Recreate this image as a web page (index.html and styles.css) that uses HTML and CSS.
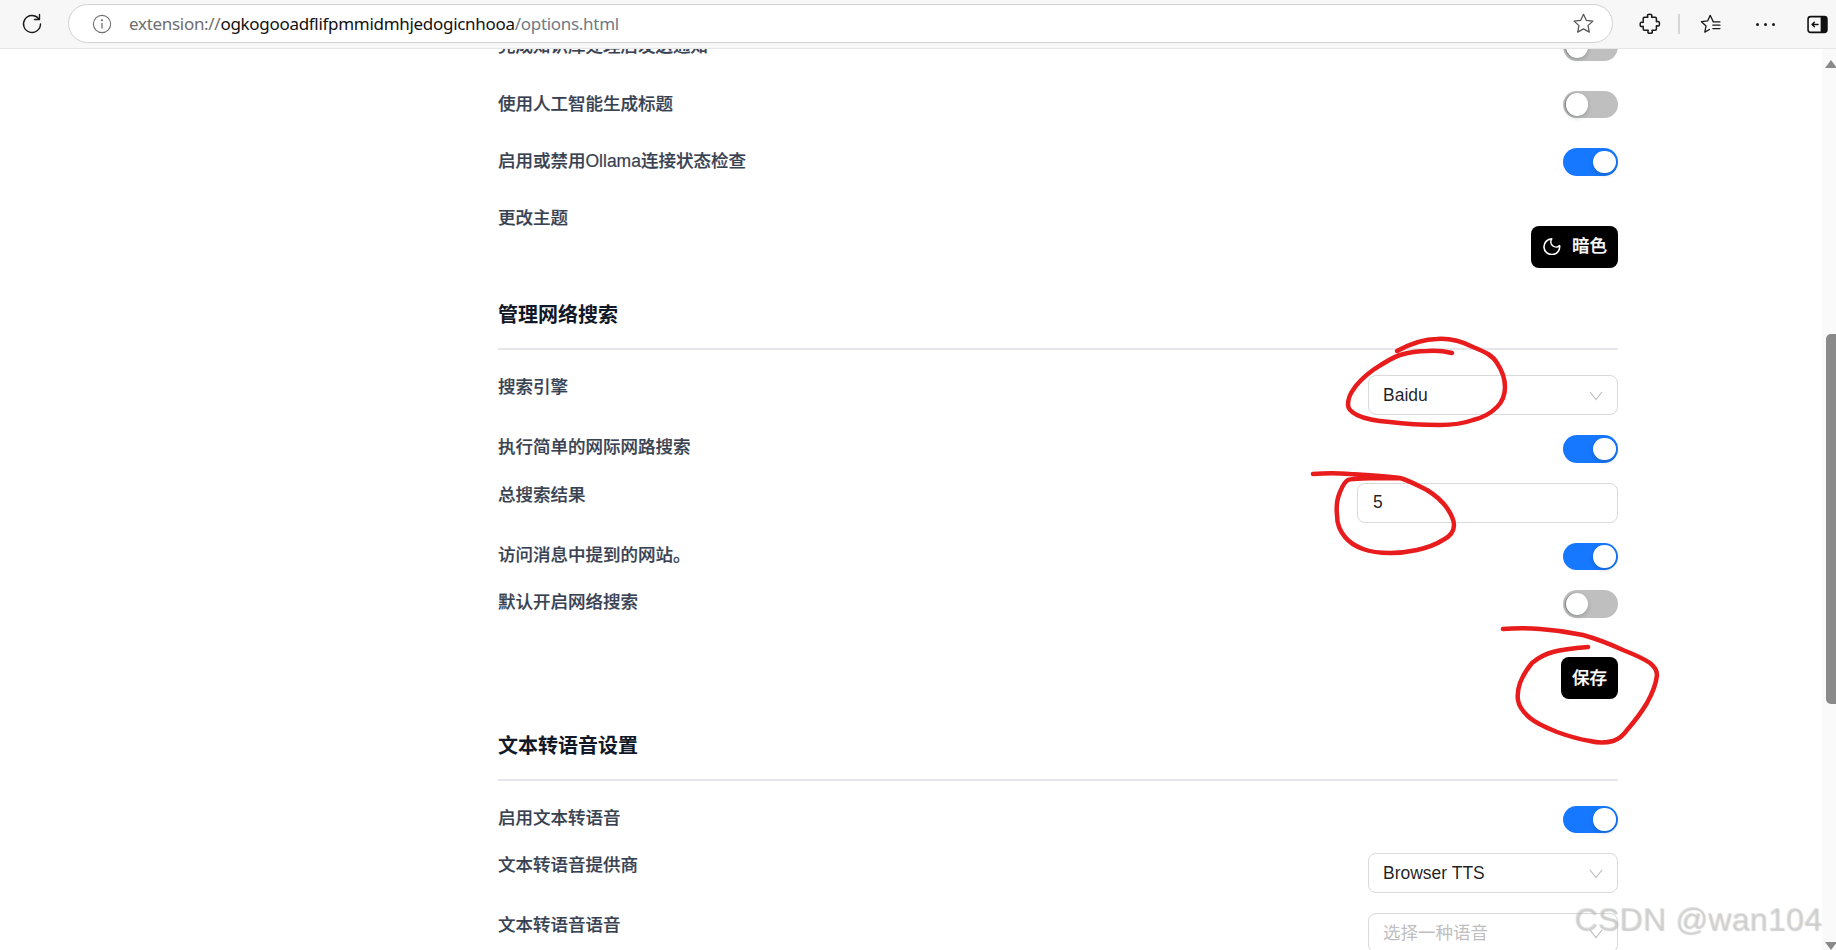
FILE: index.html
```html
<!DOCTYPE html>
<html lang="zh-CN">
<head>
<meta charset="utf-8">
<title>Options</title>
<link rel="stylesheet" href="styles.css">
</head>
<body>
<header class="toolbar">
  <button class="tool tool-reload" aria-label="Reload">
    <svg class="icon-24" viewBox="0 0 24 24" fill="none" stroke="#1a1a1a" stroke-width="1.4" stroke-linecap="round" stroke-linejoin="round"><path d="M18.5 6.500A8.500 8.500 0 1 0 20.500 12"/><path d="M19.500 2.500v5h-5"/></svg>
  </button>
  <div class="address">
    <svg class="icon-info" viewBox="0 0 20 20" fill="none" stroke="#6f6f6f" stroke-width="1.1"><circle cx="10" cy="10" r="8.6"/><path d="M10 9v5.6" stroke-width="1.3"/><circle cx="10" cy="6.3" r=".5" fill="#6f6f6f"/></svg>
    <div class="url"><span class="url-dim">extension://</span><span class="url-host">ogkogooadflifpmmidmhjedogicnhooa</span><span class="url-path">/options.html</span></div>
    <svg class="icon-star" viewBox="0 0 24 24" fill="none" stroke="#555" stroke-width="1.3" stroke-linejoin="round"><path d="M12 2.4l2.9 6.3 6.9.8-5.1 4.7 1.4 6.8-6.1-3.4-6.1 3.4 1.4-6.8-5.1-4.7 6.9-.8z"/></svg>
  </div>
  <div class="tools">
    <svg class="icon-puzzle" viewBox="0 0 24 24" fill="none" stroke="#1a1a1a" stroke-width="1.5" stroke-linejoin="round"><path d="M9.5 3.6c0-1.7 4.4-1.7 4.4 0 0 .8-.3 1.1-.3 1.7h3.6c.7 0 1.2.5 1.2 1.2v3.2c.6 0 1-.3 1.8-.3 1.7 0 1.7 4.6 0 4.6-.8 0-1.2-.3-1.8-.3v3.4c0 .7-.5 1.2-1.2 1.2h-3.2c0 .6.3 1 .3 1.6 0 1.9-4.4 1.9-4.4 0 0-.6.3-1 .3-1.6H6.4c-.7 0-1.2-.5-1.2-1.2v-2.8c-.6 0-1 .3-1.7.3-1.8 0-1.8-4.4 0-4.4.7 0 1.100.3 1.700.3V6.500c0-.7.5-1.200 1.200-1.200h3.400c0-.6-.3-.9-.3-1.700z"/></svg>
    <span class="tool-sep"></span>
    <svg class="icon-fav" viewBox="0 0 24 24" fill="none" stroke="#1a1a1a" stroke-width="1.4" stroke-linejoin="round" stroke-linecap="round"><path d="M14.400 9.300L11.100 2.600 8.300 8.700l-6.700.8 5 4.600-1.400 6.800 5.100-2.900"/><path d="M14.300 9.600h7.500M14 13.300h7.800M14 17h7.800"/></svg>
    <span class="dots"><i></i><i></i><i></i></span>
    <svg class="icon-side" viewBox="0 0 20 18" fill="none"><rect x="1" y="1.500" width="18" height="15" rx="2.500" stroke="#111" stroke-width="1.500"/><path d="M13 1.500h3.500a2.500 2.500 0 0 1 2.500 2.500v10a2.500 2.500 0 0 1-2.500 2.500H13z" fill="#111"/><path d="M10.500 9H4.800M7 6.800L4.800 9 7 11.200" stroke="#111" stroke-width="1.300" stroke-linecap="round" stroke-linejoin="round"/></svg>
  </div>
</header>

<div class="viewport">
  <main class="page">
    <div class="content">
      <div class="rows rows-wide">
        <div class="row"><span class="label">完成知识库处理后发送通知</span><span class="switch"><i></i></span></div>
        <div class="row"><span class="label">使用人工智能生成标题</span><span class="switch"><i></i></span></div>
        <div class="row"><span class="label">启用或禁用Ollama连接状态检查</span><span class="switch on"><i></i></span></div>
        <div class="row row-theme"><span class="label">更改主题</span>
          <button class="btn btn-theme">
            <svg class="icon-moon" viewBox="2 2 20 20" fill="none" stroke="#fff" stroke-width="1.800" stroke-linecap="round" stroke-linejoin="round"><path d="M12 3a6 6 0 0 0 9 7.800A9 9 0 1 1 12 3z"/></svg>
            <span>暗色</span>
          </button>
        </div>
      </div>

      <section class="section">
        <h2 class="heading">管理网络搜索</h2>
        <div class="rule"></div>
        <div class="rows">
          <div class="row"><span class="label">搜索引擎</span>
            <div class="select"><span>Baidu</span><svg class="chev" viewBox="0 0 14 10" fill="none" stroke="#bdbdbd" stroke-width="1.200"><path d="M1 1l6 7.500L13 1"/></svg></div>
          </div>
          <div class="row"><span class="label">执行简单的网际网路搜索</span><span class="switch on"><i></i></span></div>
          <div class="row"><span class="label">总搜索结果</span><div class="input">5</div></div>
          <div class="row"><span class="label">访问消息中提到的网站。</span><span class="switch on"><i></i></span></div>
          <div class="row"><span class="label">默认开启网络搜索</span><span class="switch"><i></i></span></div>
        </div>
        <div class="actions"><button class="btn">保存</button></div>
      </section>

      <section class="section">
        <h2 class="heading">文本转语音设置</h2>
        <div class="rule"></div>
        <div class="rows">
          <div class="row"><span class="label">启用文本转语音</span><span class="switch on"><i></i></span></div>
          <div class="row"><span class="label">文本转语音提供商</span>
            <div class="select"><span>Browser TTS</span><svg class="chev" viewBox="0 0 14 10" fill="none" stroke="#bdbdbd" stroke-width="1.200"><path d="M1 1l6 7.500L13 1"/></svg></div>
          </div>
          <div class="row"><span class="label">文本转语音语音</span>
            <div class="select placeholder"><span>选择一种语音</span><svg class="chev" viewBox="0 0 14 10" fill="none" stroke="#bdbdbd" stroke-width="1.200"><path d="M1 1l6 7.500L13 1"/></svg></div>
          </div>
        </div>
      </section>
    </div>
  </main>
  <aside class="scrollbar">
    <span class="arrow arrow-up"></span>
    <span class="thumb"></span>
    <span class="arrow arrow-down"></span>
  </aside>
</div>

<svg class="ink" viewBox="0 0 1836 950" fill="none" stroke="#e81c1c" stroke-width="4.500" stroke-linecap="round" stroke-linejoin="round">
  <path d="M1397 351C1410 344 1424 339 1437 339C1452 338 1463 342 1473 347C1486 352 1493 356 1497 363C1503 372 1505 379 1505 387C1505 396 1502 402 1497 407C1490 414 1482 418 1473 420C1462 424 1452 425 1440 425C1420 425 1405 424 1390 422C1375 421 1365 419 1357 415C1351 412 1348 409 1348 405C1348 399 1350 394 1353 390C1358 382 1365 376 1373 370C1382 364 1391 358 1400 355C1410 352 1418 351 1427 351C1436 350 1444 351 1452 353"/>
  <path d="M1313 474C1325 473 1338 473 1350 474C1368 475 1385 476 1400 478C1410 481 1419 486 1427 490C1435 495 1442 501 1447 508C1451 514 1454 520 1454 525C1454 532 1449 537 1443 540C1435 545 1426 548 1417 550C1408 552 1399 553 1390 553C1380 553 1371 552 1363 549C1355 546 1349 542 1345 537C1339 530 1337 523 1337 515C1336 506 1337 499 1340 492C1342 487 1344 482 1348 480C1352 478 1375 478 1400 478"/>
  <path d="M1503 629C1515 628 1528 628 1540 629C1555 630 1569 632 1583 635C1597 639 1610 644 1623 650C1633 654 1643 658 1650 663C1655 667 1657 671 1657 675C1656 685 1652 694 1647 703C1641 713 1634 722 1627 730C1623 736 1619 739 1613 741C1606 743 1598 743 1590 741C1578 739 1568 736 1557 732C1547 728 1537 724 1530 718C1523 712 1519 707 1518 700C1517 694 1518 689 1520 683C1523 675 1527 669 1532 663C1538 658 1545 654 1553 652C1564 649 1576 648 1588 647"/>
</svg>
<div class="watermark">CSDN @wan104</div>
</body>
</html>
```
FILE: styles.css
```css
* { box-sizing: border-box; }
html, body { margin: 0; height: 950px; overflow: hidden; background: #fff; }
body {
  position: relative;
  font-family: "Liberation Sans", "Noto Sans CJK SC", sans-serif;
  font-size: 17.5px;
  line-height: 25px;
  color: #374151;
  display: flex;
  flex-direction: column;
}

/* browser chrome */
.toolbar {
  flex: 0 0 49px;
  height: 49px;
  background: #f7f7f7;
  border-bottom: 1px solid #e6e6e6;
  display: flex;
  align-items: flex-start;
  position: relative;
  z-index: 2;
}
.tool { border: 0; background: none; padding: 0; }
.tool-reload { width: 24px; height: 24px; margin: 12px 24px 0 20px; }
.icon-24 { width: 24px; height: 24px; display: block; }
.address {
  width: 1545px;
  height: 39px;
  margin-top: 4px;
  background: #fff;
  border: 1.5px solid #d2d2d2;
  border-radius: 20px;
  display: flex;
  align-items: center;
  padding: 0 17px 0 23px;
}
.icon-info { width: 20px; height: 20px; flex: none; }
.url {
  margin-left: 17px;
  flex: 1;
  font-family: "Noto Sans", sans-serif;
  font-size: 17px;
  letter-spacing: -0.3px;
  white-space: nowrap;
}
.url-dim { color: #6e6e6e; }
.url-host { color: #111; }
.url-path { color: #6f7b86; }
.icon-star { width: 23px; height: 23px; flex: none; }
.tools { display: flex; align-items: center; height: 48px; padding-left: 25px; }
.icon-puzzle { width: 24px; height: 24px; }
.tool-sep { width: 2px; height: 20px; background: #d6d6d6; margin: 0 20px 0 16px; }
.icon-fav { width: 22px; height: 22px; }
.dots { display: flex; gap: 5px; margin: 0 32px 0 34px; }
.dots i { width: 3px; height: 3px; border-radius: 50%; background: #1a1a1a; }
.icon-side { width: 21px; height: 19px; }

/* page */
.viewport { flex: 1; min-height: 0; display: flex; overflow: hidden; }
.page { flex: 1; min-width: 0; overflow: hidden; padding-left: 498px; }
.content { width: 1120px; margin-top: -16px; }
.rows { display: flex; flex-direction: column; gap: 20px; }
.rows-wide { gap: 30px; }
.row { display: flex; justify-content: space-between; align-items: flex-start; }
.label { font-weight: 500; white-space: nowrap; -webkit-text-stroke: .2px #374151; }
.rows-wide .label { padding-top: 1px; }
.row-theme { margin-top: -1px; }
.section { margin-top: 29.5px; }
.section + .section { margin-top: 28.5px; }
.heading { margin: 0 0 15px; padding-top: 1px; font-size: 20px; line-height: 35px; font-weight: 700; color: #111827; }
.rule { height: 2px; background: #e6e6ea; margin-bottom: 25px; }

/* controls */
.switch {
  flex: none;
  width: 55px;
  height: 27.5px;
  border-radius: 14px;
  background: #bfbfbf;
  padding: 2.5px;
  display: flex;
}
.switch i {
  width: 22.5px;
  height: 22.5px;
  border-radius: 50%;
  background: #fff;
  box-shadow: 0 2px 4px rgba(0, 35, 11, .2), -1px 0 1px rgba(0, 0, 0, .28);
}
.switch.on { background: #1677ff; justify-content: flex-end; }
.switch.on i { box-shadow: 0 2px 4px rgba(0, 35, 11, .2); }
.btn {
  font: inherit;
  font-weight: 500;
  -webkit-text-stroke: .25px #fff;
  color: #fff;
  background: #000;
  border: 0;
  border-radius: 8px;
  height: 42px;
  padding: 0 11px;
  display: flex;
  align-items: center;
}
.btn-theme { margin-top: 21px; padding-left: 12px; gap: 11.5px; }
.icon-moon { width: 17.5px; height: 17.5px; flex: none; }
.actions { display: flex; justify-content: flex-end; margin-top: 39.5px; }
.select, .input {
  flex: none;
  background: #fff;
  border: 1px solid #d9d9d9;
  border-radius: 8px;
  height: 40px;
  color: rgba(0, 0, 0, .88);
  display: flex;
  align-items: center;
}
.select { width: 250px; padding: 0 14px; justify-content: space-between; }
.input { width: 261px; padding: 0 15px; }
.placeholder { color: #bfbfbf; }
.chev { width: 14px; height: 10px; margin-top: 1px; }

/* scrollbar */
.scrollbar {
  flex: 0 0 14px;
  background: #fafafa;
  display: flex;
  flex-direction: column;
  align-items: flex-end;
}
.arrow { width: 0; height: 0; border-left: 6px solid transparent; border-right: 6px solid transparent; margin-right: -1px; }
.arrow-up { border-bottom: 8px solid #8a8a8a; margin-top: 11px; }
.arrow-down { border-top: 8px solid #8a8a8a; margin-top: 238px; }
.thumb { width: 10px; height: 373px; background: #8a8a8a; border-radius: 5px 0 0 5px; margin-top: 266px; }

/* overlays */
.ink { position: absolute; left: 0; top: 0; width: 1836px; height: 950px; pointer-events: none; z-index: 3; }
.watermark {
  position: absolute;
  left: 1574px;
  top: 899px;
  z-index: 4;
  font-size: 32px;
  letter-spacing: .3px;
  line-height: 40px;
  white-space: nowrap;
  color: rgba(205, 205, 205, .55);
  text-shadow: 1px 1px 1px rgba(140, 140, 140, .4);
}
```
